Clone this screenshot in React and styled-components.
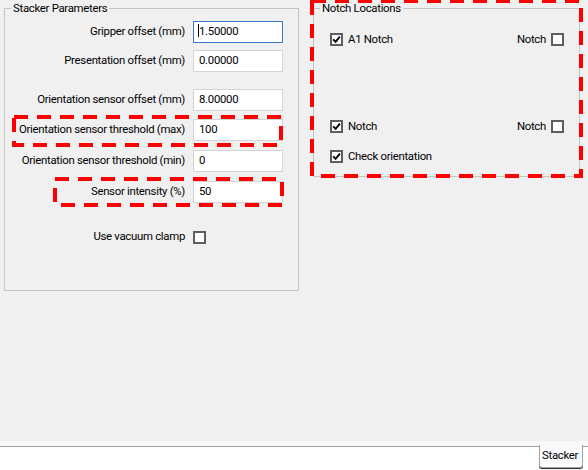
import React from 'react';
import styled, { createGlobalStyle } from 'styled-components';

const Global = createGlobalStyle`
  html, body { margin: 0; padding: 0; background: #f0f0f0; }
  body {
    font-family: Roboto, "Liberation Sans", Arial, sans-serif;
    font-size: 11.4px;
    letter-spacing: -0.3px;
    color: #000;
  }
`;

const Screen = styled.div`
  position: relative;
  width: 588px;
  height: 470px;
  overflow: hidden;
  display: flex;
  flex-direction: column;
  background: #f0f0f0;
`;

const Workspace = styled.div`
  flex: 1;
  display: flex;
  align-items: flex-start;
  padding-left: 4px;
  gap: 14px;
`;

const GroupBox = styled.fieldset`
  box-sizing: border-box;
  margin: 0;
  padding: 0;
  min-width: 0;
  width: ${p => p.$w}px;
  height: ${p => p.$h}px;
  border: 1px solid #c4c4c4;
`;

const Legend = styled.legend`
  margin-left: 6px;
  padding: 0 2px;
  line-height: 16px;
  height: 16px;
`;

const GroupBody = styled.div`
  display: flex;
  flex-direction: column;
  padding: 0 ${p => p.$padRight}px 0 ${p => p.$padLeft}px;
`;

const FieldRow = styled.div`
  display: flex;
  align-items: center;
  gap: 8px;
  height: 22px;
  margin-top: ${p => p.$top}px;
`;

const FieldLabel = styled.div`
  flex: 1;
  text-align: right;
  white-space: nowrap;
  padding-bottom: 3px;
`;

const Control = styled.div`
  width: 90px;
  display: flex;
  align-items: center;
`;

const TextBox = styled.div`
  box-sizing: border-box;
  width: 90px;
  height: 22px;
  background: #fff;
  border: 1px solid ${p => (p.$focused ? '#3b78c8' : '#d4d4d4')};
  display: flex;
  align-items: center;
  padding: 0 4px 3px 5px;
  white-space: nowrap;
`;

const Caret = styled.span`
  display: inline-block;
  width: 1px;
  height: 13px;
  background: #000;
  margin-left: -1px;
`;

const Box = styled.span`
  box-sizing: border-box;
  width: 13px;
  height: 13px;
  border: 2px solid #5e5e5e;
  background: #fff;
  display: inline-flex;
  align-items: center;
  justify-content: center;
  flex: none;
`;

const CheckRow = styled.div`
  display: flex;
  align-items: center;
  justify-content: space-between;
  height: 13px;
  margin-top: ${p => p.$top}px;
`;

const CheckItem = styled.label`
  display: flex;
  align-items: center;
  gap: 5px;
  white-space: nowrap;
  line-height: 13px;
`;

const TabBar = styled.div`
  height: 29px;
  display: flex;
  background: #f8f8f9;
`;

const TabPane = styled.div`
  margin-top: 5px;
  border-top: 1px solid #a3a3a3;
  background: #fff;
  flex: ${p => (p.$grow ? 1 : 'none')};
  width: ${p => (p.$grow ? 'auto' : `${p.$w}px`)};
`;

const Tab = styled.div`
  box-sizing: border-box;
  width: 44px;
  height: 23px;
  margin-top: 4px;
  border: 1px solid #a3a3a3;
  border-top: none;
  border-radius: 0 0 3px 3px;
  background: #fbfbfd;
  padding: 3px 0 0 2px;
  white-space: nowrap;
  box-shadow: 0 1px 0 #333;
`;

const Mark = styled.svg`
  position: absolute;
  left: ${p => p.$x}px;
  top: ${p => p.$y}px;
  overflow: visible;
  pointer-events: none;
`;

function DashedMark({ x, y, w, h }) {
  return (
    <Mark $x={x} $y={y} width={w} height={h}>
      <rect
        x="2"
        y="2"
        width={w - 4}
        height={h - 4}
        fill="none"
        stroke="#ff0000"
        strokeWidth="4"
        strokeDasharray="14 9"
      />
    </Mark>
  );
}

function CheckBox({ checked }) {
  return (
    <Box>
      {checked && (
        <svg width="9" height="9" viewBox="0 0 9 9">
          <path d="M1.2 4.4 L3.6 6.9 L7.9 1.6" fill="none" stroke="#000" strokeWidth="1.9" />
        </svg>
      )}
    </Box>
  );
}

const fields = [
  { label: 'Gripper offset (mm)', value: '1.50000', top: 5, focused: true },
  { label: 'Presentation offset (mm)', value: '0.00000', top: 7 },
  { label: 'Orientation sensor offset (mm)', value: '8.00000', top: 17 },
  { label: 'Orientation sensor threshold (max)', value: '100', top: 8 },
  { label: 'Orientation sensor threshold (min)', value: '0', top: 9 },
  { label: 'Sensor intensity (%)', value: '50', top: 9 },
];

export default function App() {
  return (
    <>
      <Global />
      <Screen>
        <Workspace>
          <GroupBox $w={295} $h={291}>
            <Legend>Stacker Parameters</Legend>
            <GroupBody $padLeft={0} $padRight={15}>
              {fields.map(f => (
                <FieldRow key={f.label} $top={f.top}>
                  <FieldLabel>{f.label}</FieldLabel>
                  <Control>
                    <TextBox $focused={f.focused}>
                      {f.focused && <Caret />}
                      {f.value}
                    </TextBox>
                  </Control>
                </FieldRow>
              ))}
              <FieldRow $top={23}>
                <FieldLabel>Use vacuum clamp</FieldLabel>
                <Control>
                  <CheckBox />
                </Control>
              </FieldRow>
            </GroupBody>
          </GroupBox>

          <GroupBox $w={267} $h={177}>
            <Legend>Notch Locations</Legend>
            <GroupBody $padLeft={16} $padRight={15}>
              <CheckRow $top={17}>
                <CheckItem>
                  <CheckBox checked />
                  A1 Notch
                </CheckItem>
                <CheckItem>
                  Notch
                  <CheckBox />
                </CheckItem>
              </CheckRow>
              <CheckRow $top={74}>
                <CheckItem>
                  <CheckBox checked />
                  Notch
                </CheckItem>
                <CheckItem>
                  Notch
                  <CheckBox />
                </CheckItem>
              </CheckRow>
              <CheckRow $top={17}>
                <CheckItem>
                  <CheckBox checked />
                  Check orientation
                </CheckItem>
              </CheckRow>
            </GroupBody>
          </GroupBox>
        </Workspace>

        <TabBar>
          <TabPane $grow />
          <Tab>Stacker</Tab>
          <TabPane $w={5} />
        </TabBar>

        <DashedMark x={12} y={115} w={271} h={32} />
        <DashedMark x={53} y={177} w={231} h={30} />
        <DashedMark x={310} y={-1} w={273} h={179} />
      </Screen>
    </>
  );
}
